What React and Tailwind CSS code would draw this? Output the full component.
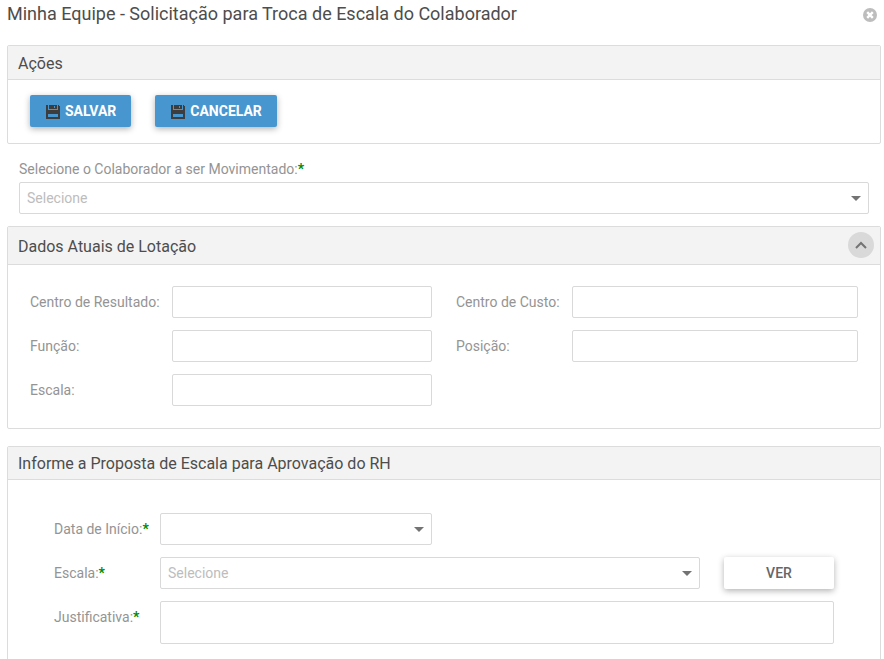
import React from "react";

const inputClass = "h-8 w-full min-w-0 rounded-xs border border-[#d9d9d9] bg-white px-2 text-sm text-[#666] outline-none";

function SaveIcon() {
  return (
    <svg width="14" height="14" viewBox="0 0 14 14" className="mt-px" shapeRendering="crispEdges" aria-hidden="true">
      <path
        fill="#3d3d3d"
        fillRule="evenodd"
        d="M0 0h2v5h10V0h1v1h1v13H0zM2 9v3h10V9zM3 0h8v4H3zM8 1v2h1V1z"
      />
    </svg>
  );
}

function CloseIcon() {
  return (
    <svg width="14" height="14" viewBox="0 0 14 14" aria-hidden="true">
      <circle cx="7" cy="7" r="7" fill="#bdbdbd" />
      <path d="M4.2 4.2l5.6 5.6M9.8 4.2L4.2 9.8" stroke="#fff" strokeWidth="2.4" />
    </svg>
  );
}

function Required() {
  return <span className="font-bold text-[#008a00]">*</span>;
}

function Label({ htmlFor, required, className = "", children }) {
  return (
    <label htmlFor={htmlFor} className={`shrink-0 text-sm text-[#949494] ${className}`}>
      {children}
      {required && <Required />}
    </label>
  );
}

function Select({ id, placeholder = "" }) {
  return (
    <div className="relative min-w-0 grow">
      <select
        id={id}
        defaultValue=""
        className="block h-8 w-full appearance-none rounded-xs border border-[#d9d9d9] bg-white pl-[7px] pr-6 text-sm text-[#bdbdbd] outline-none"
      >
        <option value="">{placeholder}</option>
      </select>
      <svg
        className="pointer-events-none absolute top-[14px] right-2"
        width="10"
        height="5"
        viewBox="0 0 10 5"
        aria-hidden="true"
      >
        <path d="M0 0h10L5 5z" fill="#737373" />
      </svg>
    </div>
  );
}

function Field({ id, label, labelClass }) {
  return (
    <div className="flex items-center">
      <Label htmlFor={id} className={labelClass}>{label}</Label>
      <input id={id} type="text" className={inputClass} />
    </div>
  );
}

function Panel({ title, action, headerClass = "h-[34px]", children }) {
  return (
    <section className="rounded-xs border border-[#dcdcdc] bg-white">
      <div className={`flex justify-between border-b border-[#dcdcdc] bg-[#f3f3f3] pl-[10px] pr-[6px] ${headerClass}`}>
        <h2 className="self-center pt-[2px] text-base text-[#4d4d4d]">{title}</h2>
        {action}
      </div>
      {children}
    </section>
  );
}

function ActionButton({ children }) {
  return (
    <button
      type="button"
      className="flex h-8 items-center gap-[5px] rounded-xs bg-[#4796cf] pr-[15px] pl-4 text-sm font-bold text-white shadow-[0_2px_6px_rgba(0,0,0,0.3)]"
    >
      <SaveIcon />
      {children}
    </button>
  );
}

function App() {
  return (
    <main className="bg-white pr-[3px] pl-[7px] pb-4 font-[Roboto,sans-serif]">
      <header className="flex h-[45px] items-start justify-between pr-1">
        <h1 className="text-lg leading-7 text-[#4d4d4d]">
          Minha Equipe - Solicitação para Troca de Escala do Colaborador
        </h1>
        <button type="button" aria-label="Fechar" className="mt-2">
          <CloseIcon />
        </button>
      </header>

      <Panel title="Ações">
        <div className="flex gap-6 px-[22px] pt-[15px] pb-4">
          <ActionButton>SALVAR</ActionButton>
          <ActionButton>CANCELAR</ActionButton>
        </div>
      </Panel>

      <div className="flex flex-col gap-[3px] px-3 pt-[15px] pb-3">
        <Label htmlFor="colaborador" required>Selecione o Colaborador a ser Movimentado:</Label>
        <Select id="colaborador" placeholder="Selecione" />
      </div>

      <Panel
        title="Dados Atuais de Lotação"
        headerClass="h-[38px]"
        action={
          <button
            type="button"
            aria-label="Recolher"
            className="mt-[5px] flex size-[26px] items-center justify-center rounded-full bg-[#d9d9d9]"
          >
            <svg width="12" height="8" viewBox="0 0 12 8" aria-hidden="true">
              <path d="M1 7l5-5 5 5" fill="none" stroke="#737373" strokeWidth="2" />
            </svg>
          </button>
        }
      >
        <div className="grid grid-cols-2 gap-x-6 gap-y-3 px-[22px] pt-[21px] pb-[22px]">
          <Field id="resultado" label="Centro de Resultado:" labelClass="w-[142px]" />
          <Field id="custo" label="Centro de Custo:" labelClass="w-[116px]" />
          <Field id="funcao" label="Função:" labelClass="w-[142px]" />
          <Field id="posicao" label="Posição:" labelClass="w-[116px]" />
          <Field id="escala-atual" label="Escala:" labelClass="w-[142px]" />
        </div>
      </Panel>

      <div className="mt-[17px]">
        <Panel title="Informe a Proposta de Escala para Aprovação do RH" headerClass="h-[33px]">
          <div className="flex flex-col gap-3 px-[46px] pt-[33px] pb-8">
            <div className="grid grid-cols-2 gap-6">
              <div className="flex items-center">
                <Label htmlFor="data" required className="w-[106px]">Data de Início:</Label>
                <Select id="data" />
              </div>
            </div>
            <div className="flex items-center">
              <Label htmlFor="escala" required className="w-[106px]">Escala:</Label>
              <Select id="escala" placeholder="Selecione" />
              <button
                type="button"
                className="ml-6 h-8 w-[110px] shrink-0 rounded-xs bg-white text-sm font-medium text-[#666] shadow-[0_2px_6px_rgba(0,0,0,0.3)]"
              >
                VER
              </button>
            </div>
            <div className="flex items-start">
              <Label htmlFor="justificativa" required className="w-[106px] pt-[6px]">Justificativa:</Label>
              <textarea
                id="justificativa"
                className="block h-[43px] min-w-0 grow resize-none rounded-xs border border-[#d9d9d9] bg-white px-2 py-1 text-sm text-[#666] outline-none"
              />
            </div>
          </div>
        </Panel>
      </div>
    </main>
  );
}

export default App;
